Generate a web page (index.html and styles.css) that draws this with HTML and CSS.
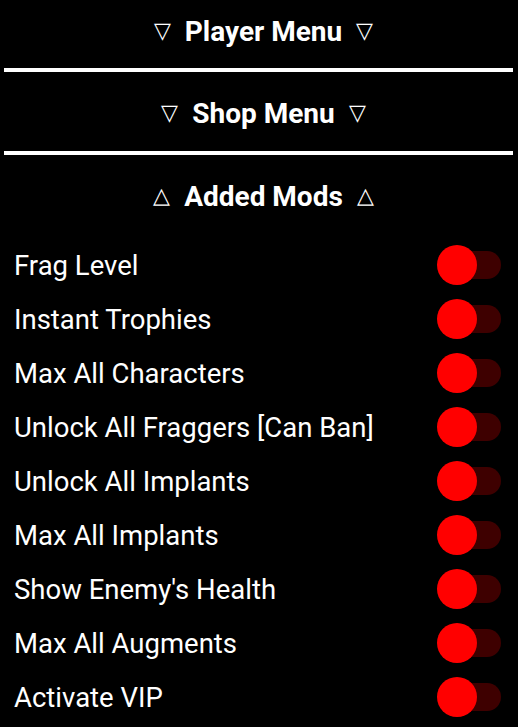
FILE: index.html
```html
<!DOCTYPE html>
<html lang="en">

<head>
    <meta charset="UTF-8">
    <meta name="viewport" content="width=device-width, initial-scale=1.0">
    <title>Mod Menu</title>
    <link rel="stylesheet" href="styles.css">
</head>

<body>

    <div class="Menu">
        <div class="Cabecera primera">
            <span class="flecha">&#9661;</span><span>Player Menu</span><span class="flecha">&#9661;</span>
        </div>
        <div class="Linea"></div>

        <div class="Cabecera">
            <span class="flecha">&#9661;</span><span>Shop Menu</span><span class="flecha">&#9661;</span>
        </div>
        <div class="Linea"></div>

        <div class="Cabecera">
            <span class="flecha">&#9651;</span><span>Added Mods</span><span class="flecha">&#9651;</span>
        </div>

        <div class="Lista">
            <div class="Fila"><span>Frag Level</span><div class="switch"><div class="bola"></div></div></div>
            <div class="Fila"><span>Instant Trophies</span><div class="switch"><div class="bola"></div></div></div>
            <div class="Fila"><span>Max All Characters</span><div class="switch"><div class="bola"></div></div></div>
            <div class="Fila"><span>Unlock All Fraggers [Can Ban]</span><div class="switch"><div class="bola"></div></div></div>
            <div class="Fila"><span>Unlock All Implants</span><div class="switch"><div class="bola"></div></div></div>
            <div class="Fila"><span>Max All Implants</span><div class="switch"><div class="bola"></div></div></div>
            <div class="Fila"><span>Show Enemy's Health</span><div class="switch"><div class="bola"></div></div></div>
            <div class="Fila"><span>Max All Augments</span><div class="switch"><div class="bola"></div></div></div>
            <div class="Fila"><span>Activate VIP</span><div class="switch"><div class="bola"></div></div></div>
        </div>
    </div>

</body>

</html>
```

FILE: styles.css
```css
body {
    font-family: Roboto, 'Liberation Sans', sans-serif;
    background-color: #000;
    color: #fff;
    margin: 0;
    overflow: hidden;
}


.Menu {
    display: flex;
    flex-direction: column;
}


.Cabecera {
    display: flex;
    justify-content: center;
    align-items: center;
    gap: 14px;
    height: 30px;
    font-weight: bold;
    font-size: 28px;
    padding: 26px 0 23px 9px;
}


.primera {
    padding-top: 16px;
    padding-bottom: 22px;
}


.flecha {
    font-weight: normal;
    font-size: 22px;
    line-height: 1;
}


.Linea {
    height: 4px;
    background-color: #fff;
    margin: 0 5px 0 4px;
}


.Lista {
    padding-top: 4px;
}


.Fila {
    display: flex;
    justify-content: space-between;
    align-items: center;
    height: 54px;
    padding: 0 17px 0 14px;
    font-size: 27.5px;
}


.switch {
    position: relative;
    width: 64px;
    height: 40px;
}


/* la pista oscura detras de la bola */
.switch::before {
    content: "";
    position: absolute;
    right: 0;
    top: 6px;
    width: 54px;
    height: 28px;
    border-radius: 14px;
    background-color: #3e0000;
}


.bola {
    position: absolute;
    left: 0;
    top: 0;
    width: 40px;
    height: 40px;
    border-radius: 50%;
    background-color: #ff0000;
}
```
